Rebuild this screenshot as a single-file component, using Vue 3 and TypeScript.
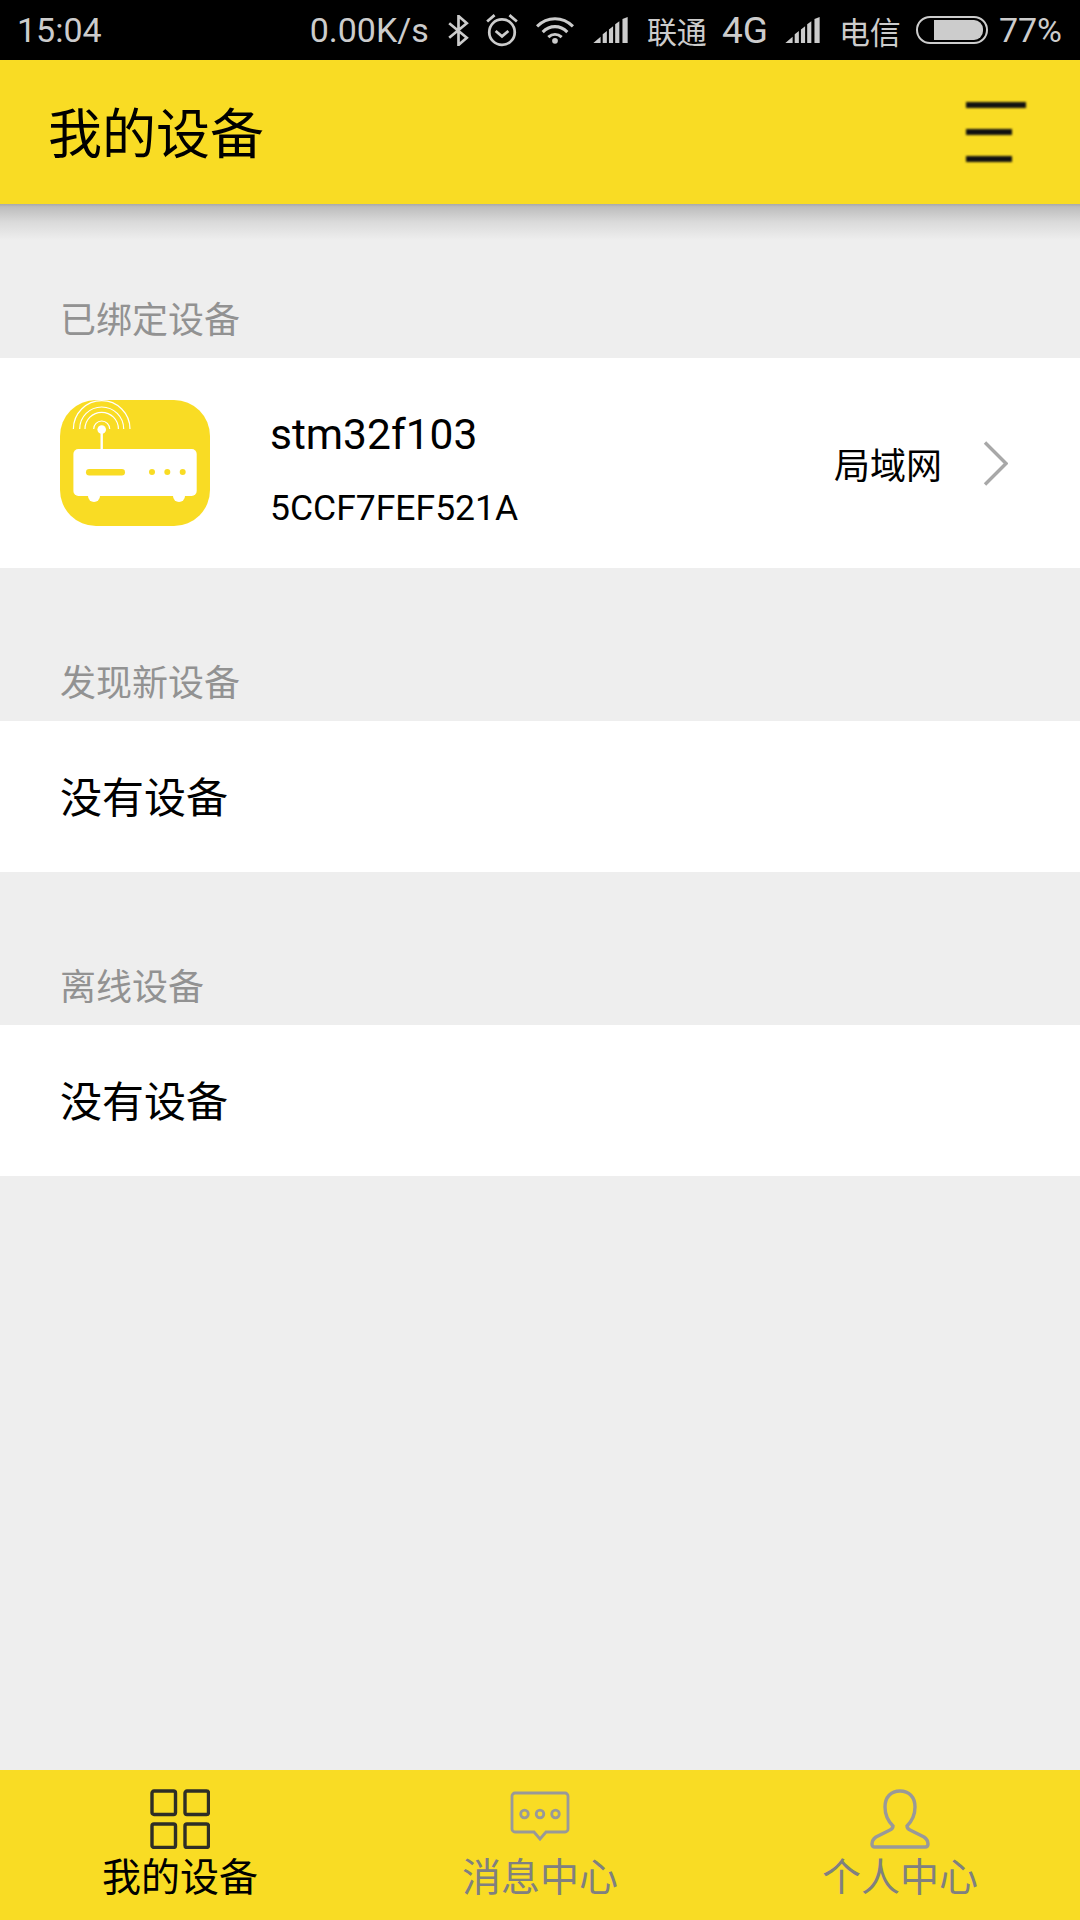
<template>
  <div class="page">
    <div class="status-bar">
      <span class="time">15:04</span>
      <div class="status-right">
        <span class="speed">0.00K/s</span>
        <svg class="bt" viewBox="0 0 20 30" fill="none" stroke="#ccc" stroke-width="2.6">
          <path d="M1 8l17 14-8 7V1l8 7L1 22" />
        </svg>
        <svg class="alarm" viewBox="0 0 30 32" fill="none" stroke="#ccc" stroke-width="2.6">
          <circle cx="15" cy="18" r="12" />
          <path d="M9 17l6 5 6-5" />
          <path d="M1 8l7-6M29 8l-7-6" />
        </svg>
        <svg class="wifi" viewBox="0 0 37 26" fill="none" stroke="#ccc" stroke-width="3">
          <path d="M1 9c10-10 25-10 35 0M6.500 14.500c7-7 17-7 24 0M12 19.500c4-3.500 9-3.500 13 0" />
          <circle cx="18.500" cy="23" r="2.800" fill="#ccc" stroke="none" />
        </svg>
        <svg class="signal" viewBox="0 0 33 25" fill="#ccc">
          <path d="M0 25l7-6v6zM9 16.500l4-3V25H9zM15 12l4-3v16h-4zM21 7l4-3v21h-4zM28 2l5-2v25h-5z" />
        </svg>
        <span class="carrier">联通</span>
        <span class="net">4G</span>
        <svg class="signal signal-2" viewBox="0 0 33 25" fill="#ccc">
          <path d="M0 25l7-6v6zM9 16.500l4-3V25H9zM15 12l4-3v16h-4zM21 7l4-3v21h-4zM28 2l5-2v25h-5z" />
        </svg>
        <span class="carrier carrier-2">电信</span>
        <div class="battery"><div class="battery-fill"></div></div>
        <span class="percent">{{ battery }}%</span>
      </div>
    </div>

    <header class="app-header">
      <h1 class="app-title">我的设备</h1>
      <div class="menu-btn">
        <span class="menu-line"></span>
        <span class="menu-line short"></span>
        <span class="menu-line short"></span>
      </div>
    </header>

    <main class="content">
      <div class="header-shadow"></div>

      <div class="section-label">已绑定设备</div>
      <div class="device-row">
        <svg class="device-icon" viewBox="0 0 150 126">
          <rect width="150" height="126" rx="36" fill="#f9dc24" />
          <g fill="none" stroke="#fff" stroke-width="1.200">
            <path d="M13.400 29a28.300 28.300 0 0 1 56.600 0" />
            <path d="M19.700 29a22 22 0 0 1 44 0" />
            <path d="M25 29a16.700 16.700 0 0 1 33.400 0" />
            <path d="M33.700 29a8 8 0 0 1 16 0" />
          </g>
          <g fill="#fff">
            <circle cx="41.700" cy="29.500" r="4.300" />
            <rect x="40.500" y="30" width="2.400" height="20" />
            <rect x="13.400" y="49" width="123.300" height="47" rx="5" />
            <circle cx="34" cy="96" r="6" />
            <circle cx="119" cy="96" r="6" />
          </g>
          <rect x="26" y="69" width="39" height="6.500" rx="3.200" fill="#f9dc24" />
          <g fill="#f9dc24">
            <circle cx="92" cy="72" r="3" />
            <circle cx="107.300" cy="72" r="3" />
            <circle cx="122.700" cy="72" r="3" />
          </g>
        </svg>
        <div class="device-info">
          <div class="device-name">stm32f103</div>
          <div class="device-mac">5CCF7FEF521A</div>
        </div>
        <span class="device-net">局域网</span>
        <svg class="chevron" viewBox="0 0 25 45" fill="none" stroke="#a8a8a8" stroke-width="3.400">
          <path d="M2 1.500l21 21-21 21" />
        </svg>
      </div>

      <div class="section-label">发现新设备</div>
      <div class="empty-row">没有设备</div>

      <div class="section-label">离线设备</div>
      <div class="empty-row">没有设备</div>
    </main>

    <nav class="tab-bar">
      <div class="tab active">
        <svg class="tab-icon" viewBox="0 0 60 60" fill="none" stroke="#2e2e26" stroke-width="3.400">
          <rect x="2" y="2" width="23.500" height="23.500" rx="2" />
          <rect x="35" y="2" width="23.500" height="23.500" rx="2" />
          <rect x="2" y="35" width="23.500" height="23.500" rx="2" />
          <rect x="35" y="35" width="23.500" height="23.500" rx="2" />
        </svg>
        <span class="tab-label">我的设备</span>
      </div>
      <div class="tab">
        <svg class="tab-icon" viewBox="0 0 60 60" fill="none" stroke="#999" stroke-width="2.800">
          <path d="M5 4h50a3 3 0 0 1 3 3v33a3 3 0 0 1-3 3H36l-6 7-6-7H5a3 3 0 0 1-3-3V7a3 3 0 0 1 3-3z" />
          <circle cx="14.500" cy="25" r="3.800" />
          <circle cx="30" cy="25" r="3.800" />
          <circle cx="45.500" cy="25" r="3.800" />
        </svg>
        <span class="tab-label">消息中心</span>
      </div>
      <div class="tab">
        <svg class="tab-icon" viewBox="0 0 60 60" fill="none" stroke="#999" stroke-width="3.400">
          <path d="M30 2c9 0 15 6 15 16 0 8-3 14-8 19 0 2 1 3 3 4l14 7c3 2 4 4 4 7 0 2-1 3-3 3H5c-2 0-3-1-3-3 0-3 1-5 4-7l14-7c2-1 3-2 3-4-5-5-8-11-8-19C15 8 21 2 30 2z" />
        </svg>
        <span class="tab-label">个人中心</span>
      </div>
    </nav>
  </div>
</template>

<script setup lang="ts">
const battery = 77
</script>

<style>
html,
body {
  margin: 0;
  background: #eeeeee;
}
</style>

<style scoped>
.page {
  display: flex;
  flex-direction: column;
  width: 1080px;
  height: 1920px;
  overflow: hidden;
  background: #eeeeee;
  font-family: Roboto, "Noto Sans CJK SC", sans-serif;
  color: #000;
}

.status-bar {
  display: flex;
  align-items: center;
  justify-content: space-between;
  flex-shrink: 0;
  height: 60px;
  padding: 0 18px 0 17px;
  box-sizing: border-box;
  background: #000;
  color: #ccc;
  font-size: 34px;
}

.status-right {
  display: flex;
  align-items: center;
}

.bt {
  width: 21px;
  height: 31px;
  margin-left: 19px;
}

.alarm {
  width: 32px;
  height: 34px;
  margin-left: 17px;
}

.wifi {
  width: 38px;
  height: 27px;
  margin-left: 18px;
}

.signal {
  width: 37px;
  height: 26px;
  margin-left: 18px;
}

.signal-2 {
  margin-left: 16px;
}

.carrier {
  margin-left: 18px;
  font-size: 30px;
}

.carrier-2 {
  font-size: 31px;
}

.net {
  margin-left: 15px;
  font-size: 37px;
}

.battery {
  display: flex;
  align-items: center;
  width: 72px;
  height: 28px;
  margin-left: 15px;
  padding: 0 3px 0 16px;
  box-sizing: border-box;
  border: 2px solid #ccc;
  border-radius: 14px;
}

.battery-fill {
  flex: 1;
  height: 20px;
  background: #ccc;
  border-radius: 0 9px 9px 0;
}

.percent {
  margin-left: 11px;
}

.app-header {
  display: flex;
  align-items: center;
  justify-content: space-between;
  flex-shrink: 0;
  height: 144px;
  padding: 0 54px 0 49px;
  background: #f9dc24;
}

.app-title {
  margin: 0 0 4px -1px;
  font-size: 54px;
  font-weight: 400;
}

.menu-btn {
  display: flex;
  flex-direction: column;
  gap: 21px;
  width: 60px;
}

.menu-line {
  display: block;
  width: 60px;
  height: 6px;
  background: #111;
  filter: blur(1px);
}

.menu-line.short {
  width: 46px;
}

.content {
  position: relative;
  flex: 1;
}

.header-shadow {
  position: absolute;
  top: 0;
  left: 0;
  right: 0;
  height: 36px;
  background: linear-gradient(#a9a9a9 0, #bdbdbd 8%, #dadada 50%, #eeeeee 100%);
}

.section-label {
  display: flex;
  align-items: flex-end;
  height: 154px;
  padding: 0 60px 12px;
  box-sizing: border-box;
  font-size: 36px;
  line-height: 50px;
  color: #929292;
}

.section-label + .device-row ~ .section-label,
.empty-row + .section-label {
  height: 153px;
}

.device-row {
  display: flex;
  align-items: center;
  height: 210px;
  padding: 0 72px 0 60px;
  background: #fff;
}

.device-icon {
  flex-shrink: 0;
  width: 150px;
  height: 126px;
  overflow: visible;
}

.device-info {
  display: flex;
  flex-direction: column;
  flex: 1;
  margin-left: 60px;
}

.device-name {
  margin-top: 11px;
  font-size: 42.500px;
  line-height: 50px;
}

.device-mac {
  margin-top: 28px;
  font-size: 35.500px;
  line-height: 40px;
}

.device-net {
  font-size: 36px;
}

.chevron {
  width: 25px;
  height: 45px;
  margin-left: 41px;
}

.empty-row {
  display: flex;
  align-items: center;
  height: 151px;
  padding: 0 60px 4px;
  box-sizing: border-box;
  background: #fff;
  font-size: 42px;
}

.tab-bar {
  display: grid;
  grid-template-columns: repeat(3, 1fr);
  flex-shrink: 0;
  height: 150px;
  background: #f9dc24;
}

.tab {
  display: flex;
  flex-direction: column;
  align-items: center;
  padding-top: 19px;
  box-sizing: border-box;
  color: #808080;
}

.tab.active {
  color: #000;
}

.tab-icon {
  width: 60px;
  height: 60px;
}

.tab-label {
  margin-top: 4px;
  font-size: 39px;
  line-height: 50px;
}
</style>
